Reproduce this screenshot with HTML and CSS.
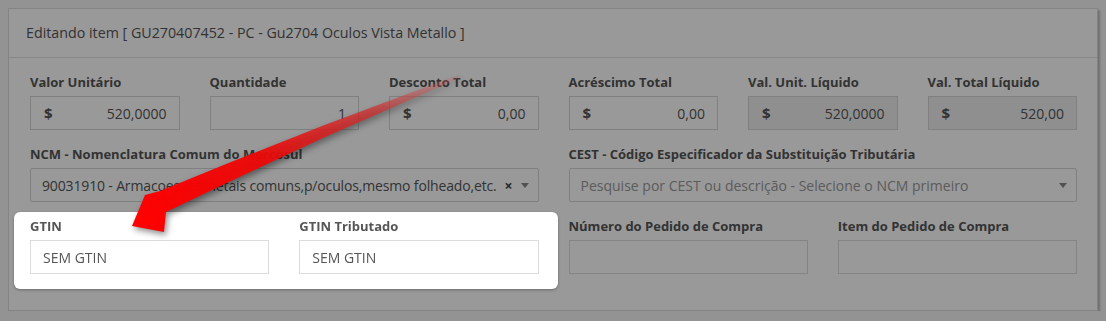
FILE: index.html
```html
<!DOCTYPE html>
<html lang="pt-BR">
<head>
  <meta charset="UTF-8">
  <title>Editando item</title>
  <link rel="stylesheet" href="styles.css">
</head>
<body>
<main class="page">
  <div class="panel">
    <div class="panel-heading">Editando item [ GU270407452 - PC - Gu2704 Oculos Vista Metallo ]</div>
    <div class="panel-body">
      <div class="row row-6">
        <div class="form-group">
          <label>Valor Unitário</label>
          <div class="input-group"><span class="addon">$</span><input class="form-control" value="520,0000"></div>
        </div>
        <div class="form-group">
          <label>Quantidade</label>
          <div class="input-group"><input class="form-control" value="1"></div>
        </div>
        <div class="form-group">
          <label>Desconto Total</label>
          <div class="input-group"><span class="addon">$</span><input class="form-control" value="0,00"></div>
        </div>
        <div class="form-group">
          <label>Acréscimo Total</label>
          <div class="input-group"><span class="addon">$</span><input class="form-control" value="0,00"></div>
        </div>
        <div class="form-group">
          <label>Val. Unit. Líquido</label>
          <div class="input-group disabled"><span class="addon">$</span><input class="form-control" value="520,0000" disabled></div>
        </div>
        <div class="form-group">
          <label>Val. Total Líquido</label>
          <div class="input-group disabled"><span class="addon">$</span><input class="form-control" value="520,00" disabled></div>
        </div>
      </div>

      <div class="row row-2">
        <div class="form-group">
          <label>NCM - Nomenclatura Comum do Mercosul</label>
          <div class="select">
            <span class="select-text">90031910 - Armacoes de metais comuns,p/oculos,mesmo folheado,etc.</span>
            <span class="select-clear">×</span>
            <span class="caret"></span>
          </div>
        </div>
        <div class="form-group">
          <label>CEST - Código Especificador da Substituição Tributária</label>
          <div class="select">
            <span class="select-text placeholder">Pesquise por CEST ou descrição - Selecione o NCM primeiro</span>
            <span class="caret"></span>
          </div>
        </div>
      </div>

      <div class="row row-2 last">
        <div class="row row-2 highlight">
          <div class="form-group">
            <label>GTIN</label>
            <input class="form-control text" value="SEM GTIN">
          </div>
          <div class="form-group">
            <label>GTIN Tributado</label>
            <input class="form-control text" value="SEM GTIN">
          </div>
        </div>
        <div class="row row-2">
          <div class="form-group">
            <label>Número do Pedido de Compra</label>
            <input class="form-control text" value="">
          </div>
          <div class="form-group">
            <label>Item do Pedido de Compra</label>
            <input class="form-control text" value="">
          </div>
        </div>
      </div>
    </div>
  </div>
</main>

<div class="overlay"></div>

<svg class="arrow" width="1106" height="321" viewBox="0 0 1106 321">
  <defs>
    <linearGradient id="arrowFill" gradientUnits="userSpaceOnUse" x1="135" y1="224" x2="458" y2="76">
      <stop offset="0" stop-color="#ff0000" stop-opacity="1"/>
      <stop offset="0.4" stop-color="#ee0808" stop-opacity="0.95"/>
      <stop offset="0.75" stop-color="#d42a2a" stop-opacity="0.7"/>
      <stop offset="1" stop-color="#d86060" stop-opacity="0.2"/>
    </linearGradient>
  </defs>
  <path d="M458,75 L322,126 L231,162 L160,191 L145,195 L132,226 L164,232 L166,212 L233,180 L323,138 L460,78 Z" fill="url(#arrowFill)"/>
</svg>
</body>
</html>
```

FILE: styles.css
```css
* {
  margin: 0;
  padding: 0;
  box-sizing: border-box;
}

body {
  background: #f6f6f6;
  font-family: "Open Sans", "Liberation Sans", sans-serif;
  font-size: 14px;
  color: #555;
}

.page {
  padding: 8px 8px 0;
}

.panel {
  background: #fff;
  border: 1px solid #ddd;
  box-shadow: 2px 2px 2px rgba(0, 0, 0, 0.25);
}

.panel-heading {
  padding: 14px 17px;
  font-size: 14.25px;
  line-height: 20px;
  border-bottom: 1px solid #e3e3e3;
  color: #555;
}

.panel-body {
  padding: 15px 20px 21px 21px;
}

.row {
  display: grid;
  column-gap: 30px;
}

.row-6 {
  grid-template-columns: repeat(6, minmax(0, 1fr));
}

.row-2 {
  grid-template-columns: repeat(2, minmax(0, 1fr));
}

.form-group {
  margin-bottom: 15px;
  min-width: 0;
}

.row .row .form-group {
  margin-bottom: 0;
}

.last {
  margin-bottom: 15px;
}

label {
  display: block;
  font-weight: 700;
  font-size: 13px;
  line-height: 18px;
  margin-bottom: 5px;
  color: #555;
}

.input-group {
  display: flex;
  align-items: center;
  height: 34px;
  border: 1px solid #d6d6d6;
  background: #fff;
}

.input-group.disabled {
  background: #eee;
}

.addon {
  padding-left: 13px;
  font-weight: 700;
  font-size: 15px;
  color: #555;
}

.form-control {
  font: inherit;
  color: #555;
  border: none;
  background: transparent;
  outline: none;
  flex: 1;
  width: 100%;
  min-width: 0;
  height: 32px;
  padding: 0 12px;
  text-align: right;
}

.form-control.text {
  display: block;
  height: 34px;
  border: 1px solid #dcdcdc;
  background: #fff;
  text-align: left;
}

.select {
  display: flex;
  align-items: center;
  height: 34px;
  padding: 0 7px 0 11px;
  border: 1px solid #d6d6d6;
  border-radius: 2px;
  background: #fff;
}

.select-text {
  flex: 1;
  min-width: 0;
  white-space: nowrap;
  overflow: hidden;
  letter-spacing: -0.15px;
}

.select-text.placeholder {
  color: #999;
  letter-spacing: 0;
}

.select-clear {
  font-weight: 700;
  font-size: 14px;
  margin: 0 8px 0 6px;
  color: #444;
}

.caret {
  width: 0;
  height: 0;
  border-left: 4px solid transparent;
  border-right: 4px solid transparent;
  border-top: 5px solid #888;
  margin-right: 2px;
}

.highlight {
  position: relative;
  z-index: 10;
}

.highlight::before {
  content: "";
  position: absolute;
  top: -5px;
  bottom: -15px;
  left: -16px;
  right: -19px;
  background: #fff;
  border-radius: 6px;
  box-shadow: 0 1px 3px rgba(0, 0, 0, 0.3);
  z-index: -1;
}

.overlay {
  position: fixed;
  inset: 0;
  background: rgba(0, 0, 0, 0.4);
  z-index: 5;
}

.arrow {
  position: absolute;
  top: 0;
  left: 0;
  z-index: 20;
  pointer-events: none;
  filter: drop-shadow(2px 3px 3px rgba(0, 0, 0, 0.45));
}
```
